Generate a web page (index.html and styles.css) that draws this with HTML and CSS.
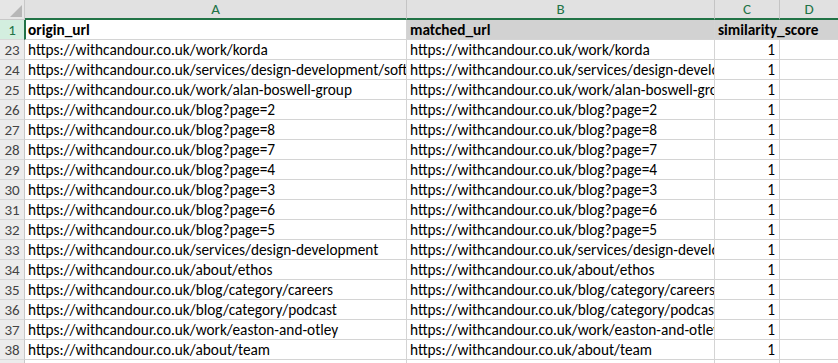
FILE: index.html
```html
<!DOCTYPE html>
<html>
<head>
<meta charset="utf-8">
<link rel="stylesheet" href="styles.css">
</head>
<body>
<div class="sheet">
  <div class="corner"><span class="tri"></span></div>
  <div class="colhead">A</div>
  <div class="colhead">B</div>
  <div class="colhead">C</div>
  <div class="colhead last">D</div>

  <div class="rowhead sel">1</div>
  <div class="cell bold active">origin_url</div>
  <div class="cell bold hl">matched_url</div>
  <div class="cell bold hl over">similarity_score</div>
  <div class="cell hl last"></div>

  <div class="rowhead">23</div><div class="cell">https://withcandour.co.uk/work/korda</div><div class="cell">https://withcandour.co.uk/work/korda</div><div class="cell num">1</div><div class="cell last"></div>
  <div class="rowhead">24</div><div class="cell">https://withcandour.co.uk/services/design-development/software-development</div><div class="cell">https://withcandour.co.uk/services/design-development/software-development</div><div class="cell num">1</div><div class="cell last"></div>
  <div class="rowhead">25</div><div class="cell">https://withcandour.co.uk/work/alan-boswell-group</div><div class="cell">https://withcandour.co.uk/work/alan-boswell-group</div><div class="cell num">1</div><div class="cell last"></div>
  <div class="rowhead">26</div><div class="cell">https://withcandour.co.uk/blog?page=2</div><div class="cell">https://withcandour.co.uk/blog?page=2</div><div class="cell num">1</div><div class="cell last"></div>
  <div class="rowhead">27</div><div class="cell">https://withcandour.co.uk/blog?page=8</div><div class="cell">https://withcandour.co.uk/blog?page=8</div><div class="cell num">1</div><div class="cell last"></div>
  <div class="rowhead">28</div><div class="cell">https://withcandour.co.uk/blog?page=7</div><div class="cell">https://withcandour.co.uk/blog?page=7</div><div class="cell num">1</div><div class="cell last"></div>
  <div class="rowhead">29</div><div class="cell">https://withcandour.co.uk/blog?page=4</div><div class="cell">https://withcandour.co.uk/blog?page=4</div><div class="cell num">1</div><div class="cell last"></div>
  <div class="rowhead">30</div><div class="cell">https://withcandour.co.uk/blog?page=3</div><div class="cell">https://withcandour.co.uk/blog?page=3</div><div class="cell num">1</div><div class="cell last"></div>
  <div class="rowhead">31</div><div class="cell">https://withcandour.co.uk/blog?page=6</div><div class="cell">https://withcandour.co.uk/blog?page=6</div><div class="cell num">1</div><div class="cell last"></div>
  <div class="rowhead">32</div><div class="cell">https://withcandour.co.uk/blog?page=5</div><div class="cell">https://withcandour.co.uk/blog?page=5</div><div class="cell num">1</div><div class="cell last"></div>
  <div class="rowhead">33</div><div class="cell">https://withcandour.co.uk/services/design-development</div><div class="cell">https://withcandour.co.uk/services/design-development</div><div class="cell num">1</div><div class="cell last"></div>
  <div class="rowhead">34</div><div class="cell">https://withcandour.co.uk/about/ethos</div><div class="cell">https://withcandour.co.uk/about/ethos</div><div class="cell num">1</div><div class="cell last"></div>
  <div class="rowhead">35</div><div class="cell">https://withcandour.co.uk/blog/category/careers</div><div class="cell">https://withcandour.co.uk/blog/category/careers</div><div class="cell num">1</div><div class="cell last"></div>
  <div class="rowhead">36</div><div class="cell">https://withcandour.co.uk/blog/category/podcast</div><div class="cell">https://withcandour.co.uk/blog/category/podcast</div><div class="cell num">1</div><div class="cell last"></div>
  <div class="rowhead">37</div><div class="cell">https://withcandour.co.uk/work/easton-and-otley</div><div class="cell">https://withcandour.co.uk/work/easton-and-otley</div><div class="cell num">1</div><div class="cell last"></div>
  <div class="rowhead">38</div><div class="cell">https://withcandour.co.uk/about/team</div><div class="cell">https://withcandour.co.uk/about/team</div><div class="cell num">1</div><div class="cell last"></div>
  <div class="rowhead"></div><div class="cell"></div><div class="cell"></div><div class="cell"></div><div class="cell last"></div>
</div>
</body>
</html>
```
FILE: styles.css
```css
html, body {
  margin: 0;
  padding: 0;
  background: #ffffff;
  overflow: hidden;
}
.sheet {
  display: grid;
  grid-template-columns: 25px 382px 308px 65px 58px;
  grid-template-rows: 20px;
  grid-auto-rows: 20px;
  font-family: Calibri, Carlito, "Liberation Sans", Arial, sans-serif;
  font-size: 15.3px;
  color: #000;
  width: 838px;
}
.corner {
  position: relative;
  background: #e6e6e6;
  border-right: 1px solid #c8c8c8;
  border-bottom: 1px solid #c8c8c8;
  box-sizing: border-box;
}
.tri {
  position: absolute;
  right: 2px;
  bottom: 2px;
  width: 12px;
  height: 12px;
  background: #b7b7b7;
  clip-path: polygon(100% 0, 100% 100%, 0 100%);
}
.colhead {
  background: #e1e1e1;
  color: #217346;
  text-align: center;
  line-height: 18px;
  font-size: 15px;
  box-sizing: border-box;
  border-right: 1px solid #c4c4c4;
  border-bottom: 2px solid #217346;
}
.colhead.last { border-right: none; }
.rowhead {
  background: #ececec;
  color: #444;
  text-align: center;
  line-height: 19px;
  font-size: 15px;
  box-sizing: border-box;
  border-right: 1px solid #c8c8c8;
  border-bottom: 1px solid #d8d8d8;
  padding-top: 1px;
}
.rowhead.sel {
  background: #d3eedf;
  color: #217346;
  border-right: 1px solid #217346;
}
.cell {
  box-sizing: border-box;
  border-right: 1px solid #d4d4d4;
  border-bottom: 1px solid #d4d4d4;
  white-space: nowrap;
  overflow: hidden;
  padding: 1px 2px 0 3px;
  line-height: 18px;
}
.cell.last { border-right: none; }
.cell.bold { font-weight: bold; }
.cell.hl { background: #d2d2d2; }
.cell.over { overflow: visible; position: relative; z-index: 1; }
.cell.active {
  border-left: 2px solid #217346;
  margin-left: -1px;
  padding-left: 2px;
}
.cell.num { text-align: right; padding-right: 4px; }
```
